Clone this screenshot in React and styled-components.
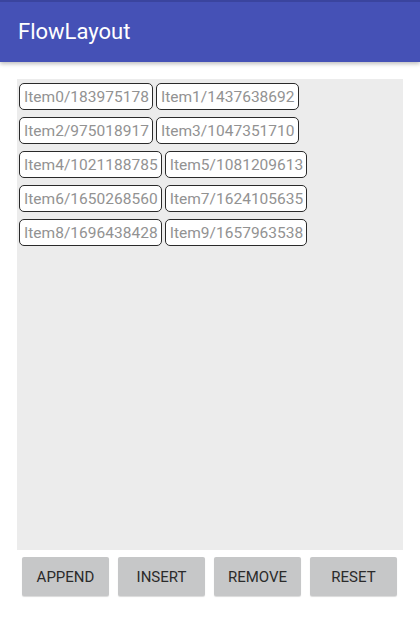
import React from 'react';
import styled, { createGlobalStyle } from 'styled-components';

const GlobalStyle = createGlobalStyle`
  html, body {
    margin: 0;
    padding: 0;
    background: #ffffff;
    font-family: Roboto, "Liberation Sans", sans-serif;
  }
`;

const items = [
  'Item0/183975178',
  'Item1/1437638692',
  'Item2/975018917',
  'Item3/1047351710',
  'Item4/1021188785',
  'Item5/1081209613',
  'Item6/1650268560',
  'Item7/1624105635',
  'Item8/1696438428',
  'Item9/1657963538',
];

// rows as the flow layout broke them in the screenshot
const rows = [[0, 1], [2, 3], [4, 5], [6, 7], [8, 9]];

function App() {
  return (
    <Screen>
      <GlobalStyle />
      <AppBar>
        <Title>FlowLayout</Title>
      </AppBar>
      <Body>
        <Flow>
          {rows.map((r, i) => (
            <FlowRow key={i}>
              {r.map((n) => (
                <Tag key={n}>{items[n]}</Tag>
              ))}
            </FlowRow>
          ))}
        </Flow>
        <Buttons>
          <Btn>APPEND</Btn>
          <Btn>INSERT</Btn>
          <Btn>REMOVE</Btn>
          <Btn>RESET</Btn>
        </Buttons>
      </Body>
    </Screen>
  );
}

const Screen = styled.div`
  width: 420px;
  height: 620px;
  display: flex;
  flex-direction: column;
  background: #fff;
`;

const AppBar = styled.header`
  height: 62px;
  flex-shrink: 0;
  background: #4551b6;
  border-top: 2px solid #3a449e;
  box-sizing: border-box;
  display: flex;
  align-items: center;
  padding-left: 18px;
  box-shadow: 0 2px 4px rgba(0, 0, 0, 0.25);
  position: relative;
  z-index: 2;
`;

const Title = styled.h1`
  margin: 0;
  margin-top: -1px;
  font-size: 22px;
  font-weight: 400;
  color: #fff;
`;

const Body = styled.main`
  flex: 1;
  display: flex;
  flex-direction: column;
  padding: 17px 17px 24px 17px;
`;

const Flow = styled.section`
  height: 471px;
  background: #ececec;
  padding: 4px 2px;
  box-sizing: border-box;
  display: flex;
  flex-direction: column;
  gap: 7px;
`;

const FlowRow = styled.div`
  display: flex;
  gap: 3px;
`;

const Tag = styled.span`
  height: 27px;
  box-sizing: border-box;
  display: flex;
  align-items: center;
  padding: 0 3px 0 4px;
  background: #fff;
  border: 1px solid #2a2a2a;
  border-radius: 5px;
  font-size: 15.5px;
  letter-spacing: 0.02px;
  color: #929292;
  white-space: nowrap;
`;

const Buttons = styled.div`
  display: grid;
  grid-template-columns: repeat(4, 87px);
  gap: 9px;
  padding: 7px 0 0 5px;
`;

const Btn = styled.button`
  height: 39px;
  border: none;
  border-radius: 2px;
  background: #c6c7c8;
  box-shadow: 0 1px 1px rgba(0, 0, 0, 0.15);
  font-family: Roboto, "Liberation Sans", sans-serif;
  font-size: 15px;
  color: #2b2b2b;
  padding: 0;
`;

export default App;
